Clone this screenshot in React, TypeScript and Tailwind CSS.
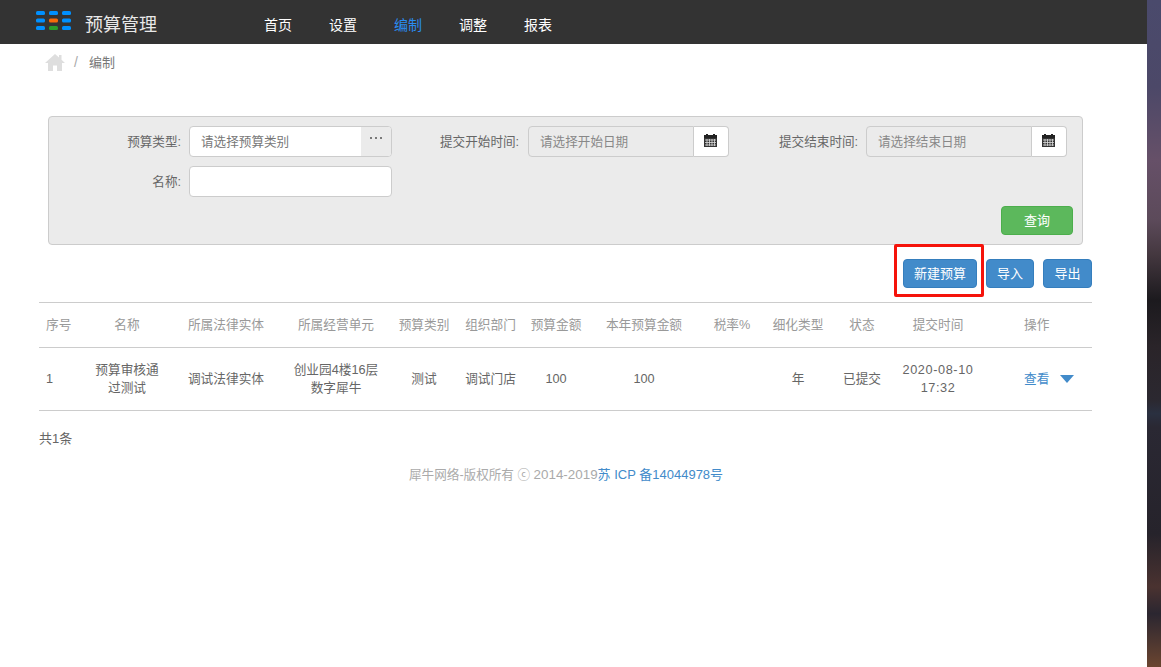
import React from 'react';

const navItems = ['首页', '设置', '编制', '调整', '报表'];

const headers = [
  '序号', '名称', '所属法律实体', '所属经营单元', '预算类别', '组织部门', '预算金额',
  '本年预算金额', '税率%', '细化类型', '状态', '提交时间',
];

function Logo() {
  const colors = [
    ['#0090ff', '#0090ff', '#0090ff'],
    ['#0090ff', '#f56a0a', '#0090ff'],
    ['#0090ff', '#2a9d2a', '#0090ff'],
  ];
  return (
    <svg width="36" height="20" viewBox="0 0 36 20" className="block">
      {colors.map((row, y) =>
        row.map((c, x) => (
          <rect key={`${x}-${y}`} x={x * 13} y={y * 7.5 + 1} width="9" height="4" rx="1.5" fill={c} />
        ))
      )}
    </svg>
  );
}

function HomeIcon() {
  return (
    <svg width="20" height="17" viewBox="0 0 20 17" className="block">
      <path d="M10 0 L14 3.6 V1 H16.5 V5.8 L20 9 H17 V17 H12 V11.5 H8 V17 H3 V9 H0 Z" fill="#dedede" />
    </svg>
  );
}

function CalendarIcon() {
  return (
    <svg width="13" height="13" viewBox="0 0 13 13" className="block">
      <rect x="0" y="1" width="13" height="3" fill="#222" />
      <rect x="2" y="0" width="2" height="2" fill="#222" />
      <rect x="9" y="0" width="2" height="2" fill="#222" />
      <rect x="0" y="4" width="13" height="9" fill="#333" />
      <path d="M1 6h11M1 8.5h11M1 11h11M3 5v7M5.5 5v7M8 5v7M10.5 5v7" stroke="#ddd" strokeWidth="0.8" />
    </svg>
  );
}

function DateField({ placeholder }: { placeholder: string }) {
  return (
    <div className="flex h-[31px]">
      <div className="w-[166px] rounded-l border border-[#ccc] bg-[#ebebeb] pl-[11px] text-[12.6px] leading-[31px] text-[#888]">
        {placeholder}
      </div>
      <div className="flex w-[35px] items-center justify-center rounded-r border border-l-0 border-[#ccc] bg-white pb-[3px] pr-[2px]">
        <CalendarIcon />
      </div>
    </div>
  );
}

function BlueButton({ label, className }: { label: string; className: string }) {
  return (
    <button className={`h-[29px] rounded border border-[#357ebd] bg-[#428bca] text-[13px] text-white ${className}`}>
      {label}
    </button>
  );
}

export default function App() {
  return (
    <div className="flex h-[667px] w-[1161px] overflow-hidden bg-white font-['Liberation_Sans','Noto_Sans_CJK_SC',sans-serif] text-[13px] text-[#666]">
      <div className="w-[1147px] shrink-0">
        <header className="flex h-[44px] items-center bg-[#333]">
          <div className="ml-[36px] mb-[4px]">
            <Logo />
          </div>
          <span className="ml-[13px] w-[179px] pt-[6px] text-[18px] text-[#e8e8e8]">预算管理</span>
          <nav className="flex gap-[37px] pt-[6px]">
            {navItems.map((item) => (
              <a key={item} className={`text-[14px] ${item === '编制' ? 'text-[#2a8cf0]' : 'text-white'}`}>
                {item}
              </a>
            ))}
          </nav>
        </header>

        <div className="flex h-[38px] items-center pl-[45px] pb-[1px]">
          <HomeIcon />
          <span className="ml-[9px] text-[14px] text-[#aaa]">/</span>
          <span className="ml-[11px] pt-[1px] text-[#777]">编制</span>
        </div>

        <section className="ml-[48px] mt-[34px] h-[129px] w-[1035px] rounded border border-[#ccc] bg-[#ebebeb] text-[12.6px]">
          <div className="flex pl-[77px] pt-[9px]">
            <label className="h-[31px] w-[55px] whitespace-nowrap text-right leading-[33px]">预算类型:</label>
            <div className="ml-[8px] flex h-[31px] w-[203px] overflow-hidden rounded border border-[#ccc] bg-white">
              <span className="flex-1 pl-[11px] leading-[31px] text-[#777]">请选择预算类别</span>
              <span className="flex w-[30px] justify-center gap-[3px] bg-[#ebebeb] pt-[10px]">
                <i className="h-[2px] w-[2px] rounded-full bg-[#555]" />
                <i className="h-[2px] w-[2px] rounded-full bg-[#555]" />
                <i className="h-[2px] w-[2px] rounded-full bg-[#555]" />
              </span>
            </div>
            <label className="ml-[48px] h-[31px] w-[79px] whitespace-nowrap text-right leading-[33px]">提交开始时间:</label>
            <div className="ml-[9px]">
              <DateField placeholder="请选择开始日期" />
            </div>
            <label className="ml-[50px] h-[31px] w-[79px] whitespace-nowrap text-right leading-[33px]">提交结束时间:</label>
            <div className="ml-[8px]">
              <DateField placeholder="请选择结束日期" />
            </div>
          </div>
          <div className="mt-[9px] flex pl-[77px]">
            <label className="h-[31px] w-[55px] whitespace-nowrap text-right leading-[33px]">名称:</label>
            <input className="ml-[8px] h-[31px] w-[203px] rounded border border-[#ccc] bg-white" />
          </div>
          <div className="mt-[9px] flex justify-end pr-[9px]">
            <button className="h-[29px] w-[72px] rounded border border-[#4cae4c] bg-[#5cb85c] text-[13px] text-white">
              查询
            </button>
          </div>
        </section>

        <div className="-mt-px ml-[894px] flex h-[53px] w-[198px] items-start">
          <div className="h-[53px] w-[90px] rounded-[2px] border-[3px] border-[#f5130b] pl-[6px] pt-[12px]">
            <BlueButton label="新建预算" className="w-[74px]" />
          </div>
          <BlueButton label="导入" className="ml-[2px] mt-[15px] w-[48px]" />
          <BlueButton label="导出" className="ml-[9px] mt-[15px] w-[49px]" />
        </div>

        <table className="ml-[39px] mt-[5px] w-[1053px] table-fixed border-y border-[#ccc] text-center text-[12.7px]">
          <colgroup>
            <col className="w-[46px]" />
            <col className="w-[84px]" />
            <col className="w-[114px]" />
            <col className="w-[106px]" />
            <col className="w-[70px]" />
            <col className="w-[63px]" />
            <col className="w-[68px]" />
            <col className="w-[108px]" />
            <col className="w-[68px]" />
            <col className="w-[64px]" />
            <col className="w-[64px]" />
            <col className="w-[88px]" />
            <col className="w-[110px]" />
          </colgroup>
          <thead>
            <tr className="h-[45px] border-b border-[#ccc] text-[#999]">
              {headers.map((h, i) => (
                <th key={h} className={`pt-[1px] font-normal ${i === 0 ? 'pl-[7px] text-left' : ''}`}>
                  {h}
                </th>
              ))}
              <th className="pl-[42px] pt-[1px] text-left font-normal">操作</th>
            </tr>
          </thead>
          <tbody>
            <tr className="h-[63px] leading-[18px]">
              <td className="pl-[7px] text-left">1</td>
              <td>
                预算审核通
                <br />
                过测试
              </td>
              <td>调试法律实体</td>
              <td>
                创业园4楼16层
                <br />
                数字犀牛
              </td>
              <td>测试</td>
              <td>调试门店</td>
              <td>100</td>
              <td>100</td>
              <td></td>
              <td>年</td>
              <td>已提交</td>
              <td className="tracking-[0.6px]">
                2020-08-10
                <br />
                17:32
              </td>
              <td className="pl-[42px] text-left">
                <div className="flex items-center">
                  <a className="text-[#428bca]">查看</a>
                  <span className="ml-[11px] h-0 w-0 border-x-[7px] border-t-[8px] border-x-transparent border-t-[#428bca]" />
                </div>
              </td>
            </tr>
          </tbody>
        </table>

        <p className="ml-[39px] mt-[18px]">共1条</p>
        <p className="ml-[409px] mt-[16px] whitespace-nowrap text-[12.6px] text-[#aaa]">
          犀牛网络-版权所有 ⓒ <span className="text-[13.4px]">2014-2019</span>
          <a className="text-[13px] text-[#428bca]">苏 ICP 备14044978号</a>
        </p>
      </div>
      <div className="w-[14px] bg-[linear-gradient(180deg,#4a4a6c_0%,#4c4868_13%,#665068_24%,#5c4a5a_33%,#453840_38%,#1c1a1e_45%,#2a2429_52%,#2b2830_60%,#2a3040_62%,#2a2833_64%,#26232b_80%,#4a3230_88%,#2b2630_92%,#6b4530_100%)]" />
    </div>
  );
}
